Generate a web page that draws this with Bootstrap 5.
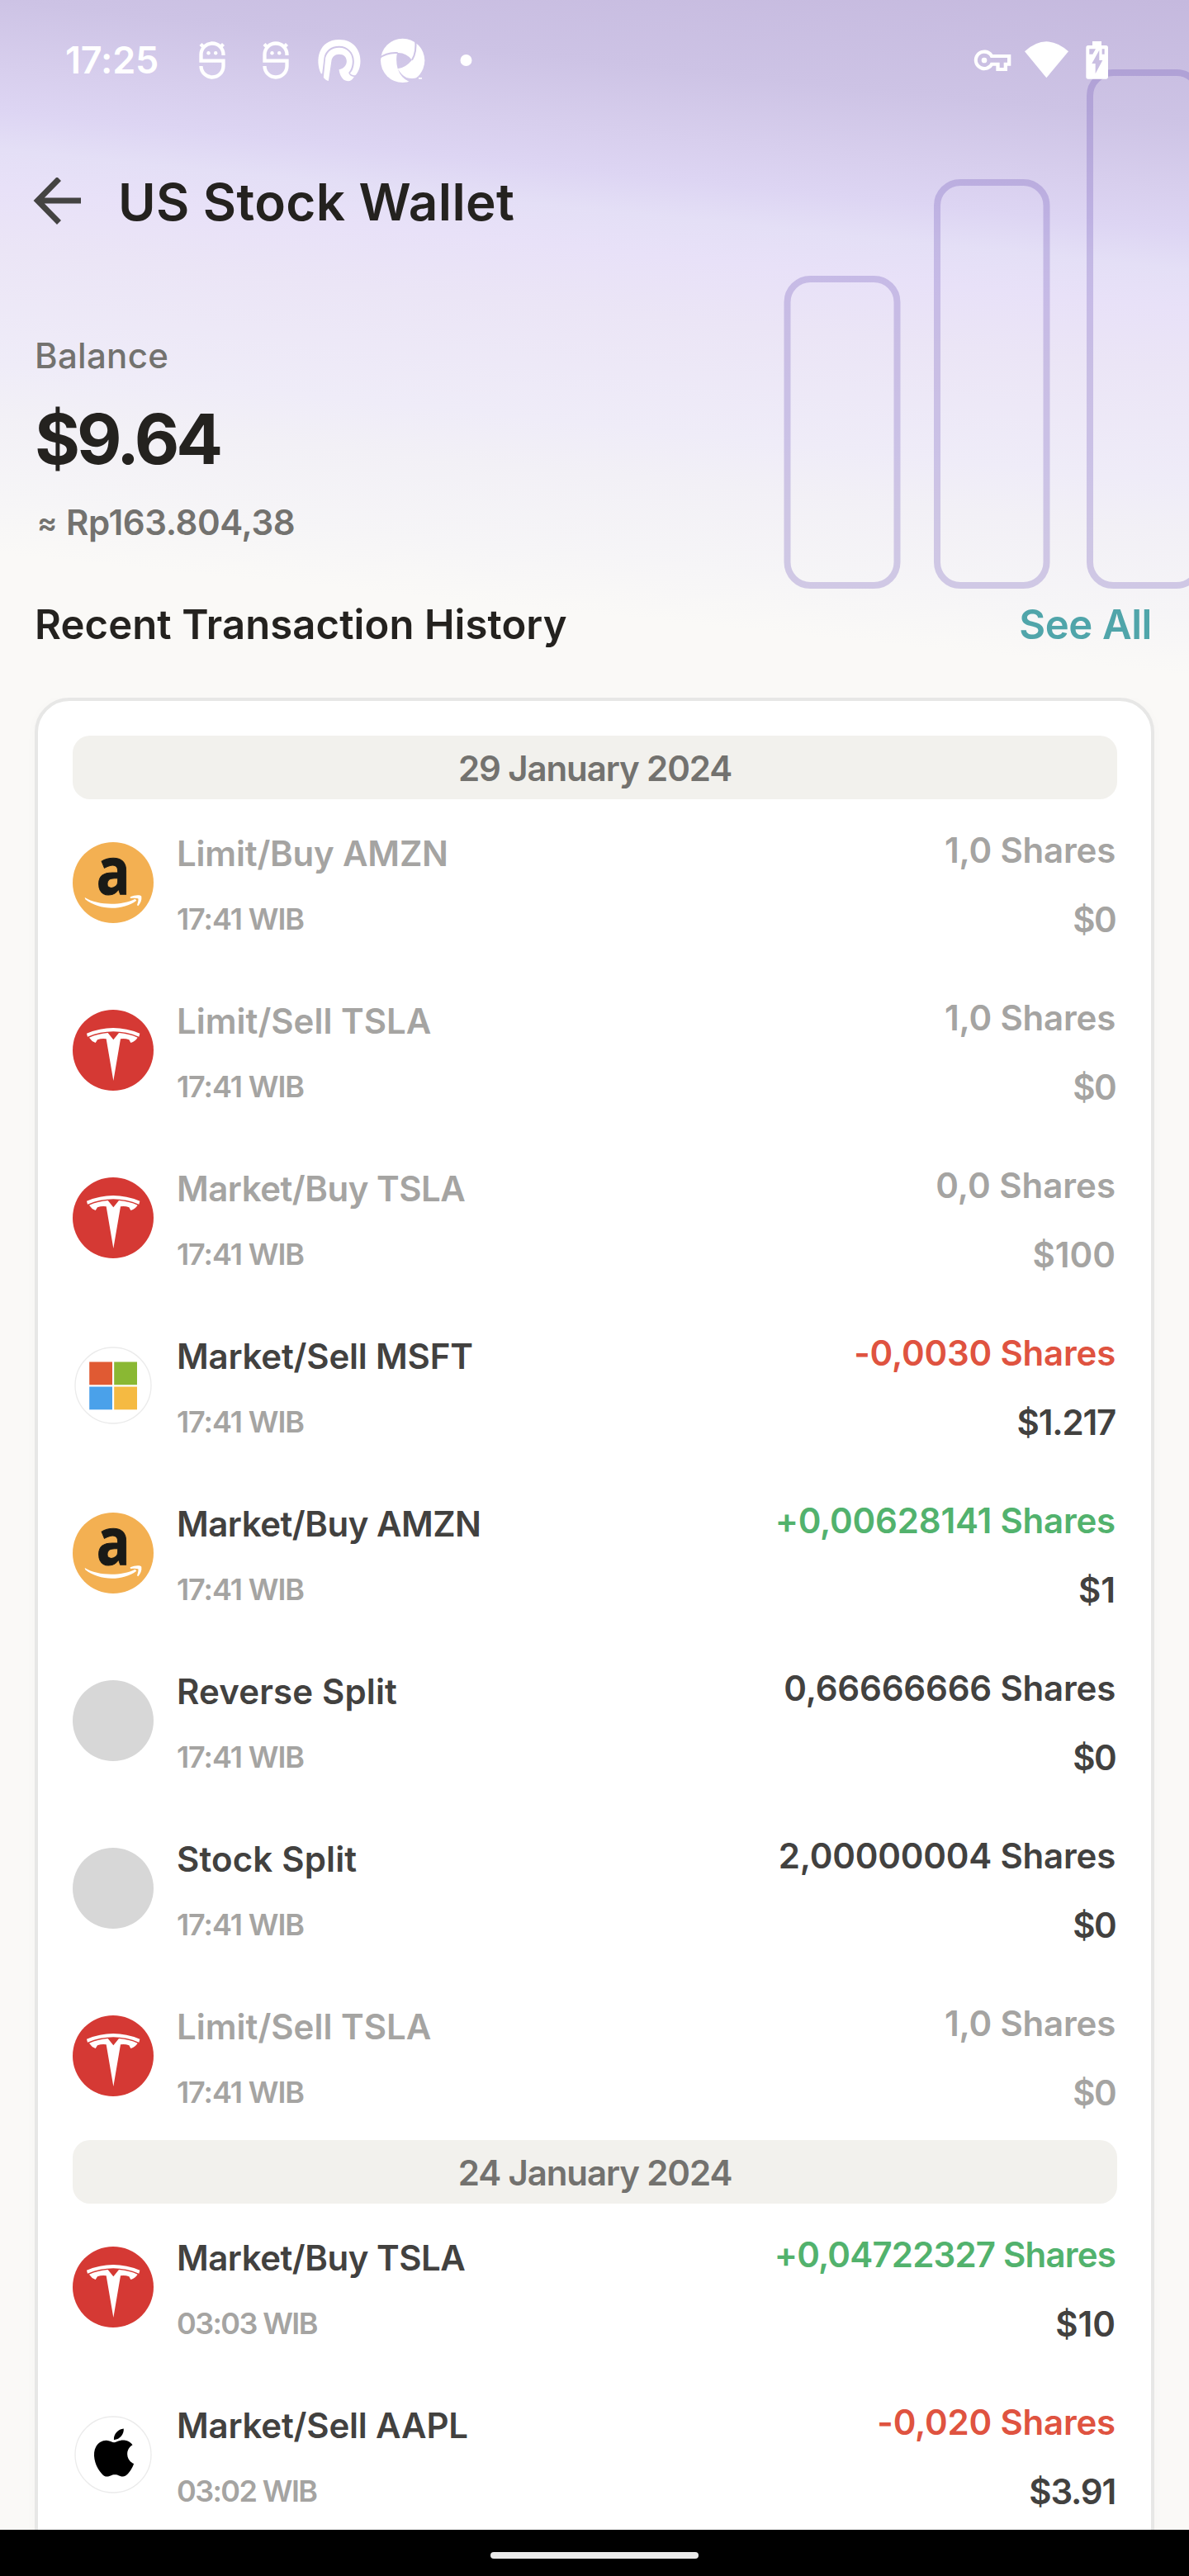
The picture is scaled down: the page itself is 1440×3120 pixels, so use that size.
<!DOCTYPE html>
<html lang="en">
<head>
<meta charset="utf-8">
<meta name="viewport" content="width=device-width, initial-scale=1">
<title>US Stock Wallet</title>
<link rel="stylesheet" href="https://cdn.jsdelivr.net/npm/bootstrap@5.3.0/dist/css/bootstrap.min.css">
<style>
  body { font-family: Inter, "Open Sans", sans-serif; font-weight: 600; color: #24221f; font-kerning: normal; }
  .screen {
    width: 1440px; height: 3120px;
    background: linear-gradient(185.8deg, #c5b9de 0, #cdc3e5 146px, #d7ceed 225px, #ddd5f3 279px, #e4dff6 325px, #e8e1f8 372px, #ebe5f6 445px, #efecf8 584px, #f2f0f6 643px, #f6f5f7 743px, #faf9f7 813px) #faf9f7;
  }
  .bars-art { position: absolute; top: 0; right: 0; }

  .status-bar { height: 146px; padding: 0 78px 0 79px; color: #fff; }
  .clock { width: 138.5px; font-size: 45px; line-height: 60px; letter-spacing: -.2px; }

  .title-bar { height: 198px; padding-left: 40px; }
  .page-title { font-size: 62px; line-height: 72px; font-weight: 600; margin: 0 0 0 43px; letter-spacing: .4px; }

  .balance { padding: 62px 42px 0; }
  .balance-label { font-size: 42px; line-height: 50px; font-weight: 500; letter-spacing: .3px; color: #73726f; }
  .balance-usd { font-size: 84px; line-height: 100px; font-weight: 700; letter-spacing: -4px; margin: 26px 0; }
  .balance-idr { font-size: 42px; line-height: 50px; letter-spacing: -.4px; color: #73726f; }
  .approx { width: 38px; padding-left: 3px; font-size: 36px; }

  .section-head { padding: 69px 45px 58px 42px; font-size: 49px; line-height: 60px; }
  .section-title { font-size: 49px; line-height: 60px; font-weight: 600; letter-spacing: .1px; }
  .see-all { color: #50a5aa; letter-spacing: -.4px; }

  .history { margin: 0 42px; padding: 42px 41px 60px 42px; border: 4px solid #e7e7e6; border-radius: 42px; box-shadow: 0 2px 14px rgba(60, 50, 40, .025); }
  .date-pill { height: 77px; border-radius: 21px; background: #f2f1ed; color: #73726f; font-size: 42px; line-height: 50px; letter-spacing: -1.1px; padding-top: 2px; }

  .trx { height: 203px; color: #42413f; font-size: 42px; line-height: 50px; }
  .trx-void { color: #a5a4a2; }
  .logo { width: 98px; height: 98px; margin: 52px 28px 0 0; }
  .trx-name { padding-top: 41px; }
  .trx-time { font-size: 36px; line-height: 44px; margin-top: 32px; color: #a5a4a2; letter-spacing: -1.1px; }
  .trx-value { padding: 37px 2px 0 0; }
  .trx-amount { margin-top: 34px; }
  .gain { color: #52b26d; }
  .loss { color: #df5340; }
  .ls-wide { letter-spacing: .15px; }
  .ls-a { letter-spacing: -.2px; }
  .ls-b { letter-spacing: -.5px; }
  .ls-c { letter-spacing: -.8px; }
  .ls-d { letter-spacing: -1.2px; }
  .ls-e { letter-spacing: -1.6px; }

  .gesture-bar { height: 56px; padding-top: 27px; }
  .gesture-bar span { width: 252px; height: 8px; background: #e9e9e9; }
</style>
<script src="https://cdn.jsdelivr.net/npm/bootstrap@5.3.0/dist/js/bootstrap.bundle.min.js"></script>
</head>
<body>

<svg class="d-none">
  <symbol id="amzn" viewBox="24 30 294 294">
    <circle cx="171" cy="177" r="147" fill="#f3b052"/>
    <text transform="translate(110 220) scale(.87 1)" font-family="Open Sans" font-weight="700" font-size="234" fill="#191a17" stroke="#191a17" stroke-width="3">a</text>
    <path fill="#fff" d="M68 231C115 260 200 262 251 236L256 242C205 280 120 278 70 238ZM233 229C250 221 270 221 274 227C276 240 270 252 262 262L258 259C261 250 264 240 262 235C254 232 245 233 234 234Z"/>
  </symbol>
  <symbol id="tsla" viewBox="24 639 294 294">
    <circle cx="171" cy="786" r="147" fill="#d53934"/>
    <path fill="#fff" d="M75 725Q171 685 268 725L265 737Q172 699 78 737ZM84 740Q115 726 152 723L172 748L192 723Q230 726 260 740Q252 753 235 759L229 748Q213 742 198 745L172 897L146 745Q130 742 114 748L107 759Q92 753 84 740Z"/>
  </symbol>
  <symbol id="msft" viewBox="0 0 98 98">
    <circle cx="49" cy="49" r="46" fill="#fff" stroke="#ebebeb" stroke-width="1.3"/>
    <path fill="#e05a33" d="M20.2 20.5h27.8v27.8h-27.8z"/><path fill="#8ab833" d="M50.2 20.5h27.8v27.8h-27.8z"/>
    <path fill="#4aa1ea" d="M20.2 50.5h27.8v27.8h-27.8z"/><path fill="#f5ba42" d="M50.2 50.5h27.8v27.8h-27.8z"/>
  </symbol>
  <symbol id="aapl" viewBox="0 0 98 98">
    <circle cx="49" cy="49" r="46" fill="#fff" stroke="#ebebeb" stroke-width="1.3"/>
    <path transform="translate(20.5 17.5) scale(2.46 2.42)" d="M12.152 6.896c-.948 0-2.415-1.078-3.960-1.040-2.040.027-3.910 1.183-4.961 3.014-2.117 3.675-.546 9.103 1.519 12.090 1.013 1.454 2.208 3.090 3.792 3.039 1.520-.065 2.090-.987 3.935-.987 1.831 0 2.350.987 3.960.948 1.637-.026 2.676-1.480 3.676-2.948 1.156-1.688 1.636-3.325 1.662-3.415-.039-.013-3.182-1.221-3.220-4.857-.026-3.040 2.480-4.494 2.597-4.559-1.429-2.090-3.623-2.324-4.390-2.376-2-.156-3.675 1.090-4.610 1.090zM15.530 3.830c.843-1.012 1.400-2.427 1.245-3.830-1.207.052-2.662.805-3.532 1.818-.780.896-1.454 2.338-1.273 3.714 1.338.104 2.715-.688 3.559-1.701"/>
  </symbol>
  <symbol id="blank" viewBox="0 0 98 98"><circle cx="49" cy="49" r="49" fill="#d7d7d7"/></symbol>
  <symbol id="mascot" viewBox="0 0 77 60">
    <path fill="none" stroke="#fff" stroke-width="4.3" d="M52.5 24V23a13.500 13.500 0 0 0-27 0V30.700H52.500V37a13.500 13.500 0 0 1-27 0M25 10.500L30 15.500M52.500 10.500L47.500 15.500"/>
    <circle cx="34.5" cy="21.3" r="2.2" fill="#fff"/><circle cx="43.2" cy="21.3" r="2.2" fill="#fff"/>
  </symbol>
</svg>

<div class="screen position-relative d-flex flex-column overflow-hidden">

  <svg class="bars-art" width="500" height="730" viewBox="940 0 500 730" fill="none" stroke="#6a50b4" stroke-opacity=".27" stroke-width="8">
    <rect x="953.5" y="338" width="133" height="371" rx="28"/>
    <rect x="1135" y="221" width="132.5" height="488" rx="28"/>
    <rect x="1320" y="88" width="133" height="621" rx="28"/>
  </svg>

  <div class="status-bar position-relative flex-shrink-0 d-flex align-items-center justify-content-between">
    <div class="d-flex align-items-center">
      <span class="clock">17:25</span>
      <svg width="77" height="60"><use href="#mascot"/></svg>
      <svg width="77" height="60"><use href="#mascot"/></svg>
      <svg width="77" height="60" fill="#fff">
        <g transform="translate(3.5 -13) scale(.3333)">
          <path d="M40 178C17 130 30 54 106 54C160 54 183 95 183 131C183 155 175 172 166 182C160 186 150 182 145 176C155 168 160 150 160 132C160 100 135 77 106 77C75 77 55 95 51 120L44 178Z"/>
          <path d="M49 191L56 120C63 95 82 83 106 83C135 83 154 104 154 132C154 150 148 165 140 174C142 183 150 188 160 189C155 199 146 205 139 205C125 205 110 195 105 163C122 160 133 148 133 133C133 117 122 107 106 107C90 107 80 117 78 130L67 204C60 202 53 197 49 191Z"/>
        </g>
      </svg>
      <svg width="77" height="60">
        <mask id="blades">
          <circle cx="338" cy="130" r="80" fill="#fff"/>
          <path d="M318 102Q350 100 372 128Q350 155 320 160Q312 130 318 102ZM320 160Q335 185 352 192Q375 200 412 188L385 216L362 207Q332 195 320 160Z"/>
          <path fill="none" stroke="#000" stroke-width="6" d="M252 122Q280 99 320 102M384 50Q390 100 372 128"/>
        </mask>
        <g transform="translate(-74 -13) scale(.3333)"><rect x="250" y="40" width="180" height="180" fill="#fff" mask="url(#blades)"/><path fill="#fff" d="M396 192h12v5h-12z"/></g>
      </svg>
      <svg width="77" height="60"><circle cx="38.5" cy="30" r="7" fill="#fff"/></svg>
    </div>
    <div class="d-flex align-items-center">
      <svg width="64" height="60" fill="#fff">
        <g transform="translate(0 -13) scale(.3333)"><path fill-rule="evenodd" d="M97 108H163V149H150V168H109V149H97A37 37 0 1 1 97 108ZM89 120H150V137H137V156H122V137H89A24.500 24.500 0 1 1 89 120Z"/><circle cx="66" cy="129" r="10"/></g>
      </svg>
      <svg width="64" height="60" fill="#fff">
        <path transform="translate(-64 -13) scale(.3333)" d="M213 97Q292 25 372 97L292 193Z"/>
      </svg>
      <svg width="64" height="60" fill="#fff">
        <path transform="translate(-128 -13) scale(.3333)" fill-rule="evenodd" d="M459 60H492V75H508Q516 75 516 83V189Q516 197 508 197H444Q436 197 436 189V83Q436 75 444 75H459ZM448 88V107H460L471 88ZM494 88V107H503V88ZM484 92L457 141H470V178L496 129H484Z"/>
      </svg>
    </div>
  </div>

  <header class="title-bar position-relative flex-shrink-0 d-flex align-items-center">
    <svg width="60" height="60" fill="none" stroke="#444342" stroke-width="7"><path d="M58 28H6M31.5 1.500L5.500 28L31.500 54.500"/></svg>
    <h1 class="page-title">US Stock Wallet</h1>
  </header>

  <section class="balance position-relative flex-shrink-0">
    <div class="balance-label">Balance</div>
    <div class="balance-usd">$9.64</div>
    <div class="balance-idr d-flex"><span class="approx">≈</span><span>Rp163.804,38</span></div>
  </section>

  <div class="section-head d-flex justify-content-between position-relative flex-shrink-0">
    <h2 class="section-title mb-0">Recent Transaction History</h2>
    <a class="see-all text-decoration-none" href="#">See All</a>
  </div>

  <main class="flex-fill overflow-hidden position-relative">
    <div class="history bg-white">
      <div class="date-pill d-flex align-items-center justify-content-center">29 January 2024</div>

      <div class="trx trx-void d-flex">
        <svg class="logo"><use href="#amzn"/></svg>
        <div class="flex-grow-1"><div class="trx-name ls-a">Limit/Buy AMZN</div><div class="trx-time">17:41 WIB</div></div>
        <div class="trx-value text-end"><div class="ls-a">1,0 Shares</div><div class="trx-amount ls-e">$0</div></div>
      </div>
      <div class="trx trx-void d-flex">
        <svg class="logo"><use href="#tsla"/></svg>
        <div class="flex-grow-1"><div class="trx-name">Limit/Sell TSLA</div><div class="trx-time">17:41 WIB</div></div>
        <div class="trx-value text-end"><div class="ls-a">1,0 Shares</div><div class="trx-amount ls-e">$0</div></div>
      </div>
      <div class="trx trx-void d-flex">
        <svg class="logo"><use href="#tsla"/></svg>
        <div class="flex-grow-1"><div class="trx-name ls-b">Market/Buy TSLA</div><div class="trx-time">17:41 WIB</div></div>
        <div class="trx-value text-end"><div>0,0 Shares</div><div class="trx-amount">$100</div></div>
      </div>
      <div class="trx d-flex">
        <svg class="logo"><use href="#msft"/></svg>
        <div class="flex-grow-1"><div class="trx-name ls-a">Market/Sell MSFT</div><div class="trx-time">17:41 WIB</div></div>
        <div class="trx-value text-end"><div class="loss ls-a">-0,0030 Shares</div><div class="trx-amount ls-d">$1.217</div></div>
      </div>
      <div class="trx d-flex">
        <svg class="logo"><use href="#amzn"/></svg>
        <div class="flex-grow-1"><div class="trx-name ls-b">Market/Buy AMZN</div><div class="trx-time">17:41 WIB</div></div>
        <div class="trx-value text-end"><div class="gain ls-a">+0,00628141 Shares</div><div class="trx-amount">$1</div></div>
      </div>
      <div class="trx d-flex">
        <svg class="logo"><use href="#blank"/></svg>
        <div class="flex-grow-1"><div class="trx-name ls-wide">Reverse Split</div><div class="trx-time">17:41 WIB</div></div>
        <div class="trx-value text-end"><div class="ls-a">0,66666666 Shares</div><div class="trx-amount ls-e">$0</div></div>
      </div>
      <div class="trx d-flex">
        <svg class="logo"><use href="#blank"/></svg>
        <div class="flex-grow-1"><div class="trx-name ls-wide">Stock Split</div><div class="trx-time">17:41 WIB</div></div>
        <div class="trx-value text-end"><div class="ls-a">2,00000004 Shares</div><div class="trx-amount ls-e">$0</div></div>
      </div>
      <div class="trx trx-void d-flex">
        <svg class="logo"><use href="#tsla"/></svg>
        <div class="flex-grow-1"><div class="trx-name">Limit/Sell TSLA</div><div class="trx-time">17:41 WIB</div></div>
        <div class="trx-value text-end"><div class="ls-a">1,0 Shares</div><div class="trx-amount ls-e">$0</div></div>
      </div>

      <div class="date-pill d-flex align-items-center justify-content-center">24 January 2024</div>

      <div class="trx d-flex">
        <svg class="logo"><use href="#tsla"/></svg>
        <div class="flex-grow-1"><div class="trx-name ls-b">Market/Buy TSLA</div><div class="trx-time ls-e">03:03 WIB</div></div>
        <div class="trx-value text-end"><div class="gain ls-c">+0,04722327 Shares</div><div class="trx-amount">$10</div></div>
      </div>
      <div class="trx d-flex">
        <svg class="logo"><use href="#aapl"/></svg>
        <div class="flex-grow-1"><div class="trx-name ls-a">Market/Sell AAPL</div><div class="trx-time ls-e">03:02 WIB</div></div>
        <div class="trx-value text-end"><div class="loss ls-a">-0,020 Shares</div><div class="trx-amount ls-d">$3.91</div></div>
      </div>
    </div>
  </main>

  <footer class="gesture-bar position-relative bg-black d-flex justify-content-center flex-shrink-0">
    <span class="rounded-pill"></span>
  </footer>
</div>
</body>
</html>
